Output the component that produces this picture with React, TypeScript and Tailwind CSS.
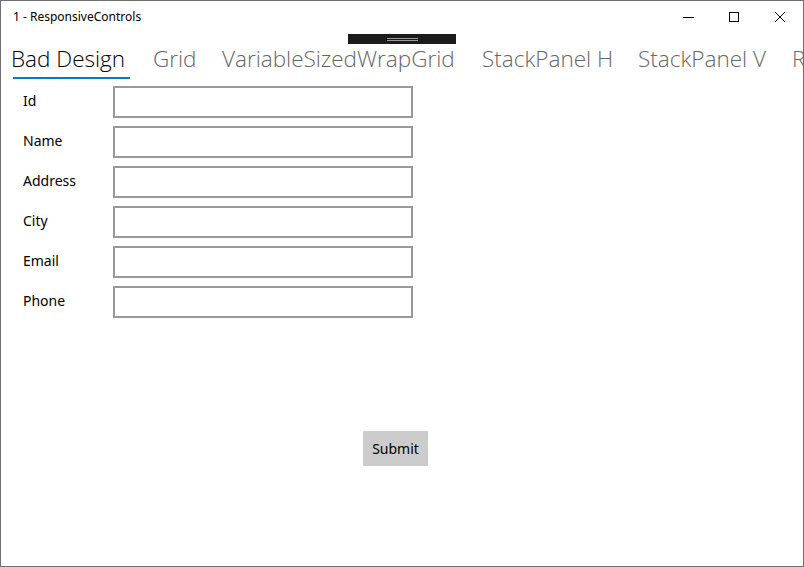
const TABS = [
  { label: 'Bad Design', width: 'w-[142px]', active: true },
  { label: 'Grid', width: 'w-[69px]', active: false },
  { label: 'VariableSizedWrapGrid', width: 'w-[260px]', active: false },
  { label: 'StackPanel H', width: 'w-[156px]', active: false },
  { label: 'StackPanel V', width: 'w-[154px]', active: false },
  { label: 'RelativePanel', width: 'w-[160px]', active: false },
];

const FIELDS = ['Id', 'Name', 'Address', 'City', 'Email', 'Phone'];

function CaptionIcon({ kind }: { kind: 'min' | 'max' | 'close' }) {
  return (
    <svg width="12" height="12" viewBox="0 0 12 12" fill="none" stroke="#000" strokeWidth="1" shapeRendering="crispEdges">
      {kind === 'min' && <path d="M0.5 6.5h11" />}
      {kind === 'max' && <rect x="1.5" y="1.5" width="9" height="9" />}
      {kind === 'close' && <path d="M1 1l10 10M11 1L1 11" shapeRendering="geometricPrecision" />}
    </svg>
  );
}

export default function App() {
  return (
    <div
      className="relative flex h-[567px] w-[804px] flex-col overflow-hidden border border-[#707070] bg-white text-black"
      style={{ fontFamily: '"Segoe UI", "Noto Sans", "Open Sans", sans-serif' }}
    >
      {/* title bar */}
      <div className="flex h-[32px] shrink-0 items-center">
        <div className="pl-[12px] text-[12px] leading-none">1 - ResponsiveControls</div>
        <div className="ml-auto flex h-full">
          <div className="flex h-full w-[46px] items-center justify-center">
            <CaptionIcon kind="min" />
          </div>
          <div className="flex h-full w-[46px] items-center justify-center">
            <CaptionIcon kind="max" />
          </div>
          <div className="flex h-full w-[46px] items-center justify-center">
            <CaptionIcon kind="close" />
          </div>
        </div>
      </div>

      {/* in-app toolbar */}
      <div className="absolute top-[33px] left-[347px] flex h-[10px] w-[108px] flex-col items-center justify-center gap-[1px] bg-[#1b1b1b]">
        <div className="h-px w-[31px] bg-[#9a9a9a]" />
        <div className="h-px w-[31px] bg-[#9a9a9a]" />
      </div>

      {/* pivot headers */}
      <div
        className="flex h-[48px] shrink-0 overflow-hidden whitespace-nowrap pl-[10px]"
        style={{ fontFamily: '"Open Sans", "Noto Sans", sans-serif' }}
      >
        {TABS.map((t) => (
          <div key={t.label} className={`relative shrink-0 ${t.width} pt-[10px]`}>
            <span
              className={`text-[22.5px] leading-[32px] font-light ${t.active ? 'text-black' : 'text-[#666666]'}`}
            >
              {t.label}
            </span>
            {t.active && <div className="absolute top-[44px] left-[2px] h-[2px] w-[117px] bg-[#0078d7]" />}
          </div>
        ))}
      </div>

      {/* form */}
      <div className="flex flex-col gap-[8px] pt-[5px]">
        {FIELDS.map((f) => (
          <div key={f} className="flex h-[32px] items-center">
            <div className="w-[112px] pb-[3px] pl-[22px] text-[14px]">{f}</div>
            <div className="h-[32px] w-[300px] border-2 border-[#999999] bg-white" />
          </div>
        ))}
      </div>

      <div className="flex pt-[113px] pl-[362px]">
        <button className="h-[35px] w-[65px] bg-[#cccccc] text-[14px]">Submit</button>
      </div>
    </div>
  );
}
